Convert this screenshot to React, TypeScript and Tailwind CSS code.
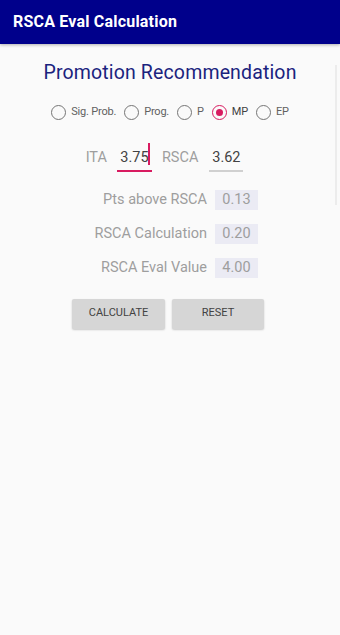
import React from "react";

function Radio({ checked }: { checked?: boolean }) {
  return (
    <span
      className={`inline-flex items-center justify-center w-[15px] h-[15px] rounded-full border-[1.5px] ${
        checked ? "border-[#d81b60]" : "border-[#757575]"
      }`}
    >
      {checked && <span className="w-[7px] h-[7px] rounded-full bg-[#d81b60]" />}
    </span>
  );
}

export default function App() {
  const opts = [
    { l: "Sig. Prob.", c: false },
    { l: "Prog.", c: false },
    { l: "P", c: false },
    { l: "MP", c: true },
    { l: "EP", c: false },
  ];
  const rows = [
    ["Pts above RSCA", "0.13"],
    ["RSCA Calculation", "0.20"],
    ["RSCA Eval Value", "4.00"],
  ];
  return (
    <div className="w-[340px] h-[635px] bg-[#fafafa] flex flex-col" style={{ fontFamily: "Roboto, 'Noto Sans', sans-serif" }}>
      <div className="h-[44px] bg-[#00008b] flex items-center pl-[13px] shadow-[0_1px_3px_rgba(0,0,0,0.3)]">
        <span className="text-white text-[16px] font-bold tracking-[0.2px]">RSCA Eval Calculation</span>
      </div>
      <div className="flex flex-1">
        <div className="flex-1 flex flex-col items-center">
          <div className="mt-[17px] text-[19.5px] leading-[24px] text-[#1a237e] tracking-[0.15px] pl-[5px]">
            Promotion Recommendation
          </div>
          <div className="mt-[19px] flex items-center text-[11px] tracking-[-0.2px] text-[#616161] pl-[5px]">
            {opts.map((o, i) => (
              <div key={i} className="flex items-center">
                <Radio checked={o.c} />
                <span className={`ml-[5px] ${o.c ? "text-[#424242]" : ""} ${i < 4 ? "mr-[8px]" : ""}`}>{o.l}</span>
              </div>
            ))}
          </div>
          <div className="mt-[26px] flex items-end text-[14.5px] pr-[6px]">
            <span className="text-[#9e9e9e] mb-[4px]">ITA</span>
            <div className="ml-[10px] w-[35px] border-b-2 border-[#d81b60] pb-[2px] text-center text-[#424242] relative">
              3.75
              <span className="absolute right-[2px] top-[-4px] w-[2px] h-[22px] bg-[#d81b60]" />
            </div>
            <span className="ml-[10px] text-[#9e9e9e] mb-[4px]">RSCA</span>
            <div className="ml-[11px] w-[34px] border-b-2 border-[#d0d0d0] pb-[2px] text-center text-[#424242]">3.62</div>
          </div>
          <div className="mt-[17px] flex flex-col gap-[12px] pl-[93px] self-start">
            {rows.map(([l, v], i) => (
              <div key={i} className="flex items-center">
                <span className="w-[114px] text-right text-[14.5px] text-[#9e9e9e]">{l}</span>
                <span className="ml-[8px] w-[43px] h-[20px] bg-[#ebebf4] text-[14.5px] text-[#9e9e9e] flex items-center justify-center">
                  {v}
                </span>
              </div>
            ))}
          </div>
          <div className="mt-[20px] flex gap-[7px] pl-[1px]">
            <button className="w-[93px] h-[30px] bg-[#d6d6d6] rounded-[2px] text-[11px] text-[#424242] shadow-[0_1px_2px_rgba(0,0,0,0.2)]">
              CALCULATE
            </button>
            <button className="w-[92px] h-[30px] bg-[#d6d6d6] rounded-[2px] text-[11px] text-[#424242] shadow-[0_1px_2px_rgba(0,0,0,0.2)]">
              RESET
            </button>
          </div>
        </div>
        <div className="w-[4px] mr-[1px] flex flex-col">
          <div className="mt-[21px] h-[140px] w-[2px] bg-[#ececec]" />
        </div>
      </div>
    </div>
  );
}
